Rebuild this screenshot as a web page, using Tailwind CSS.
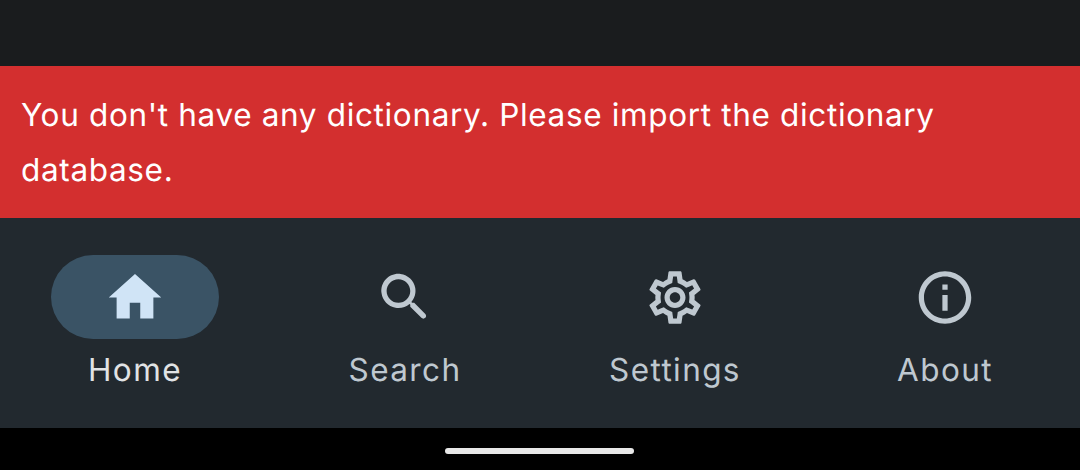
<!DOCTYPE html>
<html lang="en">
<head>
    <meta charset="UTF-8">
    <title>Dictionary</title>
    <meta name="viewport" content="width=device-width, initial-scale=1.0">
    <script src="https://cdn.jsdelivr.net/npm/@tailwindcss/browser@4"></script>
</head>
<body class="bg-black h-[470px] overflow-hidden flex flex-col font-['Inter',sans-serif] font-[375] antialiased [text-rendering:geometricPrecision]">
    <div class="h-[66px] bg-[#1a1c1e]"></div>

    <!-- error banner -->
    <div class="h-[152px] bg-[#d32f2f] px-[21px] py-[21px] text-white text-[31.5px] leading-[55px] tracking-[0.655px]">
        <p>You don't have any dictionary. Please import the dictionary database.</p>
    </div>

    <!-- bottom navigation -->
    <nav class="h-[210px] bg-[#22292f] grid grid-cols-4 pt-[37px]">
        <div class="flex flex-col items-center">
            <div class="w-[168px] h-[84px] rounded-full bg-[#3a5365] flex items-center justify-center">
                <svg class="w-[63px] h-[63px] mr-[1px] fill-[#d0e4f6]" viewBox="-0.19 0 24 24"><path d="M10 20v-6h4v6h5v-8h3L12 3 2 12h3v8z"/></svg>
            </div>
            <span class="mt-[10px] text-[31.5px] leading-[42px] tracking-[1.4px] text-[#e1e3e5]">Home</span>
        </div>
        <div class="flex flex-col items-center">
            <div class="w-[168px] h-[84px] flex items-center justify-center">
                <svg class="w-[63px] h-[63px] mr-[1px] fill-[#bfc8d0]" viewBox="-0.19 0 24 24"><path d="M15.5 14h-.79l-.28-.27c1.2-1.4 1.82-3.31 1.48-5.34-.47-2.78-2.79-5-5.59-5.34-4.23-.52-7.79 3.04-7.27 7.27.34 2.8 2.56 5.12 5.34 5.59 2.03.34 3.94-.28 5.34-1.48l.27.28v.79l4.25 4.25c.41.41 1.08.41 1.49 0 .41-.41.41-1.08 0-1.49L15.5 14zm-6 0C7.01 14 5 11.99 5 9.5S7.01 5 9.5 5 14 7.01 14 9.5 11.99 14 9.5 14z"/></svg>
            </div>
            <span class="mt-[10px] text-[31.5px] leading-[42px] tracking-[1.4px] text-[#bfc8d0]">Search</span>
        </div>
        <div class="flex flex-col items-center">
            <div class="w-[168px] h-[84px] flex items-center justify-center">
                <svg class="w-[63px] h-[63px] mr-[1px] fill-[#bfc8d0]" viewBox="-0.19 0 24 24"><path d="M19.43 12.98c.04-.32.07-.64.07-.98 0-.34-.03-.66-.07-.98l2.11-1.65c.19-.15.24-.42.12-.64l-2-3.46c-.09-.16-.26-.25-.44-.25-.06 0-.12.01-.17.03l-2.49 1c-.52-.4-1.08-.73-1.69-.98l-.38-2.65C14.46 2.18 14.25 2 14 2h-4c-.25 0-.46.18-.49.42l-.38 2.65c-.61.25-1.17.59-1.69.98l-2.49-1c-.06-.02-.12-.03-.18-.03-.17 0-.34.09-.43.25l-2 3.46c-.13.22-.07.49.12.64l2.11 1.65c-.04.32-.07.65-.07.98 0 .33.03.66.07.98l-2.11 1.65c-.19.15-.24.42-.12.64l2 3.46c.09.16.26.25.44.25.06 0 .12-.01.17-.03l2.49-1c.52.4 1.08.73 1.69.98l.38 2.65c.03.24.24.42.49.42h4c.25 0 .46-.18.49-.42l.38-2.65c.61-.25 1.17-.59 1.69-.98l2.49 1c.06.02.12.03.18.03.17 0 .34-.09.43-.25l2-3.46c.12-.22.07-.49-.12-.64l-2.11-1.65zm-1.98-1.71c.04.31.05.52.05.73 0 .21-.02.43-.05.73l-.14 1.13.89.7 1.08.84-.7 1.21-1.27-.51-1.04-.42-.9.68c-.43.32-.84.56-1.25.73l-1.06.43-.16 1.13-.2 1.35h-1.4l-.19-1.35-.16-1.13-1.06-.43c-.43-.18-.83-.41-1.23-.71l-.91-.7-1.06.43-1.27.51-.7-1.21 1.08-.84.89-.7-.14-1.13c-.03-.31-.05-.54-.05-.74s.02-.43.05-.73l.14-1.13-.89-.7-1.08-.84.7-1.21 1.27.51 1.04.42.9-.68c.43-.32.84-.56 1.25-.73l1.06-.43.16-1.13.2-1.35h1.39l.19 1.35.16 1.13 1.06.43c.43.18.83.41 1.23.71l.91.7 1.06-.43 1.27-.51.7 1.21-1.07.85-.89.7.14 1.13zM12 8c-2.21 0-4 1.79-4 4s1.79 4 4 4 4-1.79 4-4-1.79-4-4-4zm0 6c-1.1 0-2-.9-2-2s.9-2 2-2 2 .9 2 2-.9 2-2 2z"/></svg>
            </div>
            <span class="mt-[10px] text-[31.5px] leading-[42px] tracking-[1.4px] text-[#bfc8d0]">Settings</span>
        </div>
        <div class="flex flex-col items-center">
            <div class="w-[168px] h-[84px] flex items-center justify-center">
                <svg class="w-[63px] h-[63px] mr-[1px] fill-[#bfc8d0]" viewBox="-0.19 0 24 24"><path d="M11 7h2v2h-2zm0 4h2v6h-2zm1-9C6.48 2 2 6.48 2 12s4.48 10 10 10 10-4.48 10-10S17.52 2 12 2zm0 18c-4.41 0-8-3.59-8-8s3.59-8 8-8 8 3.59 8 8-3.59 8-8 8z"/></svg>
            </div>
            <span class="mt-[10px] text-[31.5px] leading-[42px] tracking-[1.4px] text-[#bfc8d0]">About</span>
        </div>
    </nav>

    <!-- gesture bar -->
    <div class="flex-1 flex items-center justify-center">
        <div class="w-[189px] h-[6px] mr-[1px] mt-[4px] rounded-full bg-[#e8e8e8]"></div>
    </div>
</body>
</html>
